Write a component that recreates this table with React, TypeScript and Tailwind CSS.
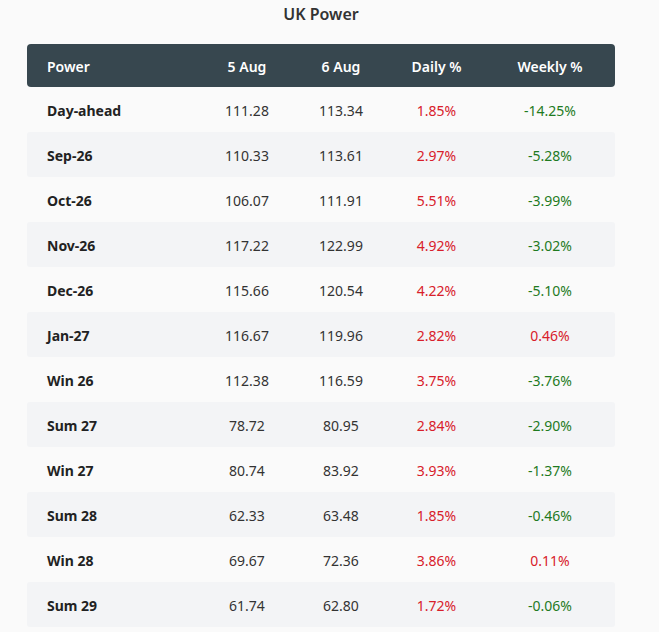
import React from 'react'

type Row = {
  name: string
  prev: string
  curr: string
  daily: string
  weekly: string
}

const rows: Row[] = [
  { name: 'Day-ahead', prev: '111.28', curr: '113.34', daily: '1.85%', weekly: '-14.25%' },
  { name: 'Sep-26', prev: '110.33', curr: '113.61', daily: '2.97%', weekly: '-5.28%' },
  { name: 'Oct-26', prev: '106.07', curr: '111.91', daily: '5.51%', weekly: '-3.99%' },
  { name: 'Nov-26', prev: '117.22', curr: '122.99', daily: '4.92%', weekly: '-3.02%' },
  { name: 'Dec-26', prev: '115.66', curr: '120.54', daily: '4.22%', weekly: '-5.10%' },
  { name: 'Jan-27', prev: '116.67', curr: '119.96', daily: '2.82%', weekly: '0.46%' },
  { name: 'Win 26', prev: '112.38', curr: '116.59', daily: '3.75%', weekly: '-3.76%' },
  { name: 'Sum 27', prev: '78.72', curr: '80.95', daily: '2.84%', weekly: '-2.90%' },
  { name: 'Win 27', prev: '80.74', curr: '83.92', daily: '3.93%', weekly: '-1.37%' },
  { name: 'Sum 28', prev: '62.33', curr: '63.48', daily: '1.85%', weekly: '-0.46%' },
  { name: 'Win 28', prev: '69.67', curr: '72.36', daily: '3.86%', weekly: '0.11%' },
  { name: 'Sum 29', prev: '61.74', curr: '62.80', daily: '1.72%', weekly: '-0.06%' },
]

// negative = green (price falling), positive = red
const changeColor = (v: string) => (v.startsWith('-') ? 'text-[#1f7a1f]' : 'text-[#d8202a]')

export default function App() {
  return (
    <div
      className="min-h-screen bg-[#fafafa] text-[#222]"
      style={{ fontFamily: '"Noto Sans", "Open Sans", sans-serif' }}
    >
      <div className="w-[642px] px-[27px]">
        <h2 className="pt-[3px] pb-[19px] text-center text-[16px] leading-[22px] font-semibold text-[#333]">
          UK Power
        </h2>

        <table className="w-full border-separate border-spacing-0 text-[14px]">
          <thead>
            <tr className="text-white">
              <th className="h-[43px] w-[173px] rounded-l-[4px] bg-[#37474f] pt-[2px] pl-5 text-left font-semibold">Power</th>
              <th className="w-[94px] bg-[#37474f] pt-[2px] text-center font-semibold">5 Aug</th>
              <th className="w-[94px] bg-[#37474f] pt-[2px] text-center font-semibold">6 Aug</th>
              <th className="w-[97px] bg-[#37474f] pt-[2px] text-center font-semibold">Daily %</th>
              <th className="rounded-r-[4px] bg-[#37474f] pt-[2px] text-center font-semibold">Weekly %</th>
            </tr>
          </thead>
          <tbody>
            {rows.map((r, i) => {
              const bg = i % 2 === 1 ? 'bg-[#f3f4f6]' : ''
              return (
                <tr key={r.name}>
                  <td className={`h-[45px] rounded-l-[3px] pt-[2px] pl-5 font-bold ${bg}`}>{r.name}</td>
                  <td className={`pt-[2px] text-center text-[#333] ${bg}`}>{r.prev}</td>
                  <td className={`pt-[2px] text-center text-[#333] ${bg}`}>{r.curr}</td>
                  <td className={`pt-[2px] text-center ${changeColor(r.daily)} ${bg}`}>{r.daily}</td>
                  <td className={`rounded-r-[3px] pt-[2px] text-center ${changeColor(r.weekly)} ${bg}`}>{r.weekly}</td>
                </tr>
              )
            })}
          </tbody>
        </table>
      </div>
    </div>
  )
}
